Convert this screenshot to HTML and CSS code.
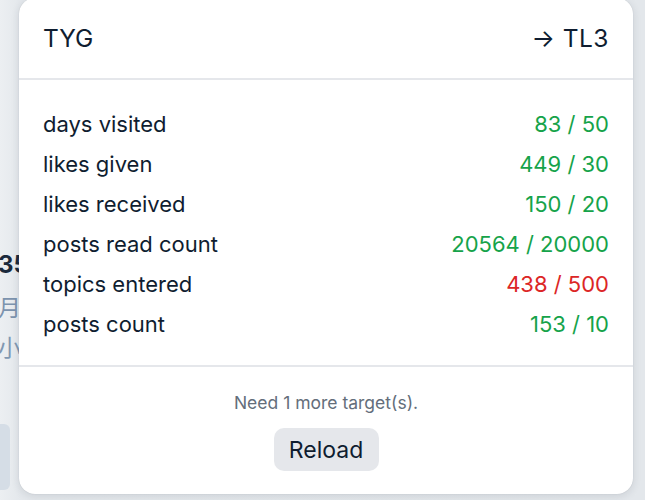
FILE: index.html
```html
<!DOCTYPE html>
<html lang="en">
<head>
<meta charset="utf-8">
<link rel="stylesheet" href="styles.css">
</head>
<body>
<div class="page">
  <div class="backdrop">
    <div class="bg-num">35</div>
    <div class="bg-cjk">月</div>
    <div class="bg-cjk small">小</div>
    <div class="bg-box"></div>
  </div>
  <div class="popup">
    <div class="popup-head">
      <span class="title">TYG</span>
      <span class="target">→ TL3</span>
    </div>
    <div class="popup-body">
      <div class="row"><span>days visited</span><span class="ok">83 / 50</span></div>
      <div class="row"><span>likes given</span><span class="ok">449 / 30</span></div>
      <div class="row"><span>likes received</span><span class="ok">150 / 20</span></div>
      <div class="row"><span>posts read count</span><span class="ok">20564 / 20000</span></div>
      <div class="row"><span>topics entered</span><span class="bad">438 / 500</span></div>
      <div class="row"><span>posts count</span><span class="ok">153 / 10</span></div>
    </div>
    <div class="popup-foot">
      <div class="note">Need 1 more target(s).</div>
      <button class="reload">Reload</button>
    </div>
  </div>
</div>
</body>
</html>
```
FILE: styles.css
```css
* { box-sizing: border-box; }
html, body { margin: 0; padding: 0; }
body {
  width: 645px;
  height: 500px;
  overflow: hidden;
  background: #e3e7eb;
  font-family: Inter, "Noto Sans", sans-serif;
}
.page {
  position: relative;
  width: 645px;
  height: 500px;
  background: linear-gradient(90deg, #eceff2 0px, #e4e8ec 20px, #e3e7eb 100%);
}
.backdrop {
  display: flex;
  flex-direction: column;
  padding-top: 248px;
  margin-left: -2px;
}
.bg-num {
  font-size: 24px;
  font-weight: 700;
  color: #1b2a3c;
  line-height: 34px;
}
.bg-cjk {
  font-family: "Noto Sans CJK SC", sans-serif;
  font-size: 23px;
  color: #7c93ae;
  line-height: 40px;
  margin-top: 4px;
}
.bg-cjk.small { margin-top: 0; color: #8198b2; }
.bg-box {
  margin-top: 58px;
  margin-left: -10px;
  width: 22px;
  height: 66px;
  border-radius: 6px;
  background: #d5dde6;
}
.popup {
  position: absolute;
  left: 19px;
  top: -2px;
  width: 614px;
  height: 496px;
  background: #ffffff;
  border-radius: 16px;
  box-shadow: 0 2px 8px rgba(30, 45, 60, 0.12), 0 0 1px rgba(30, 45, 60, 0.2);
  display: flex;
  flex-direction: column;
  color: #0f1d30;
}
.popup-head {
  height: 82px;
  display: flex;
  align-items: center;
  justify-content: space-between;
  padding: 0 24px 0 24px;
  border-bottom: 2px solid #e5e7eb;
  font-size: 24.5px;
}
.target { letter-spacing: 0.5px; }
.popup-body {
  padding: 24px 24px 21px 24px;
  border-bottom: 2px solid #e5e7eb;
}
.row {
  display: flex;
  justify-content: space-between;
  align-items: center;
  height: 40px;
  font-size: 22px;
}
.ok { color: #16a34a; }
.bad { color: #dc2626; }
.popup-foot {
  display: flex;
  flex-direction: column;
  align-items: center;
  padding-top: 25px;
}
.note {
  font-size: 17.5px;
  color: #646e7b;
  line-height: 22px;
}
.reload {
  margin-top: 14px;
  width: 105px;
  height: 43px;
  border: none;
  border-radius: 10px;
  background: #e5e7eb;
  font-family: Inter, "Noto Sans", sans-serif;
  font-size: 23px;
  color: #0f1d30;
  padding: 0;
}
```
